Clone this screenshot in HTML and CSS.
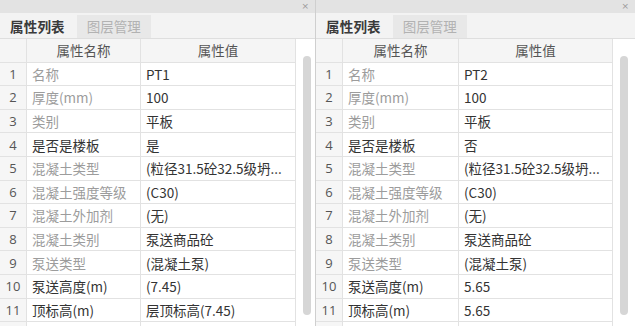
FILE: index.html
```html
<!DOCTYPE html>
<html lang="zh-CN">
<head>
    <meta charset="UTF-8">
    <title>属性列表</title>
    <link rel="stylesheet" href="styles.css">
</head>
<body>
    <div class="panes">
        <div class="pane pane-left">
            <div class="titlebar"><span class="close">×</span></div>
            <div class="tabs">
                <span class="tab active">属性列表</span>
                <span class="tab">图层管理</span>
            </div>
            <div class="body">
                <div class="grid" id="grid-left"></div>
                <div class="scroll"><div class="thumb"></div></div>
            </div>
        </div>
        <div class="pane pane-right">
            <div class="titlebar"><span class="close">×</span></div>
            <div class="tabs">
                <span class="tab active">属性列表</span>
                <span class="tab">图层管理</span>
            </div>
            <div class="body">
                <div class="grid" id="grid-right"></div>
                <div class="scroll"><div class="thumb"></div></div>
            </div>
        </div>
    </div>

    <script>
        // name, muted?, value for each pane
        const rows = [
            ['名称', true, 'PT1', 'PT2'],
            ['厚度(mm)', true, '100', '100'],
            ['类别', true, '平板', '平板'],
            ['是否是楼板', false, '是', '否'],
            ['混凝土类型', true, '(粒径31.5砼32.5级坍...', '(粒径31.5砼32.5级坍...'],
            ['混凝土强度等级', true, '(C30)', '(C30)'],
            ['混凝土外加剂', true, '(无)', '(无)'],
            ['混凝土类别', true, '泵送商品砼', '泵送商品砼'],
            ['泵送类型', true, '(混凝土泵)', '(混凝土泵)'],
            ['泵送高度(m)', false, '(7.45)', '5.65'],
            ['顶标高(m)', false, '层顶标高(7.45)', '5.65'],
            ['', false, '', '']
        ];

        function buildGrid(id, col) {
            const grid = document.getElementById(id);
            let html = `
                <div class="row head">
                    <div class="cell num"></div>
                    <div class="cell name">属性名称</div>
                    <div class="cell value">属性值</div>
                </div>`;
            rows.forEach((r, i) => {
                html += `
                <div class="row">
                    <div class="cell num">${r[0] ? i + 1 : ''}</div>
                    <div class="cell name ${r[1] ? 'muted' : ''}">${r[0]}</div>
                    <div class="cell value">${r[col]}</div>
                </div>`;
            });
            grid.innerHTML = html;
        }

        buildGrid('grid-left', 2);
        buildGrid('grid-right', 3);
    </script>
</body>
</html>
```

FILE: styles.css
```css
body {
    margin: 0;
    padding: 0;
    background-color: #fff;
    font-family: "Noto Sans CJK SC", "Open Sans", sans-serif;
    color: #333;
    overflow: hidden;
}
.panes {
    display: flex;
    height: 326px;
    overflow: hidden;
}
.pane {
    display: flex;
    flex-direction: column;
    overflow: hidden;
}
.pane-left {
    width: 315px;
    border-right: 1px solid #cfcfcf;
}
.pane-right {
    width: 319px;
}
.titlebar {
    height: 13px;
    background-color: #e3e3e3;
    display: flex;
    justify-content: flex-end;
    align-items: center;
    flex-shrink: 0;
}
.close {
    font-family: "DejaVu Sans", sans-serif;
    font-size: 9px;
    line-height: 9px;
    color: #9a9a9a;
    margin-right: 6px;
}
.tabs {
    height: 25px;
    background-color: #f3f3f3;
    border-bottom: 1px solid #dedede;
    display: flex;
    align-items: flex-end;
    flex-shrink: 0;
}
.tab {
    height: 23px;
    line-height: 22px;
    font-size: 13.5px;
    padding: 0 10px;
    color: #b2b2b2;
    background-color: #e8e8e8;
    margin-right: 2px;
}
.tab.active {
    color: #3a3a3a;
    background-color: #f3f3f3;
    font-weight: bold;
    letter-spacing: 0.2px;
}
.body {
    display: flex;
    flex: 1;
    overflow: hidden;
}
.grid {
    flex: 1;
    display: flex;
    flex-direction: column;
}
.row {
    display: flex;
    height: 23.6px;
    box-sizing: border-box;
    border-bottom: 1px solid #e2e2e2;
    flex-shrink: 0;
}
.cell {
    display: flex;
    align-items: center;
    box-sizing: border-box;
    border-right: 1px solid #e2e2e2;
    font-size: 13.5px;
    white-space: nowrap;
    overflow: hidden;
    padding-left: 5px;
}
.num {
    width: 27px;
    justify-content: center;
    padding-left: 0;
    background-color: #f6f6f6;
    color: #555;
    font-family: "Open Sans", sans-serif;
    font-size: 13px;
}
.name {
    width: 114px;
    color: #333;
}
.name.muted {
    color: #9c9c9c;
}
.value {
    flex: 1;
    color: #333;
}
.head .cell {
    background-color: #f5f5f5;
    justify-content: center;
    padding-left: 0;
    color: #555;
}
.scroll {
    width: 19px;
    background-color: #fff;
    flex-shrink: 0;
    padding-top: 17px;
}
.thumb {
    width: 8px;
    height: 259px;
    margin-left: 7px;
    border-radius: 4px;
    background-color: #d6d6d6;
}
.pane-right .name {
    width: 116px;
}
.pane-right .scroll {
    width: 22px;
}
.pane-right .thumb {
    margin-left: 7px;
}
```
